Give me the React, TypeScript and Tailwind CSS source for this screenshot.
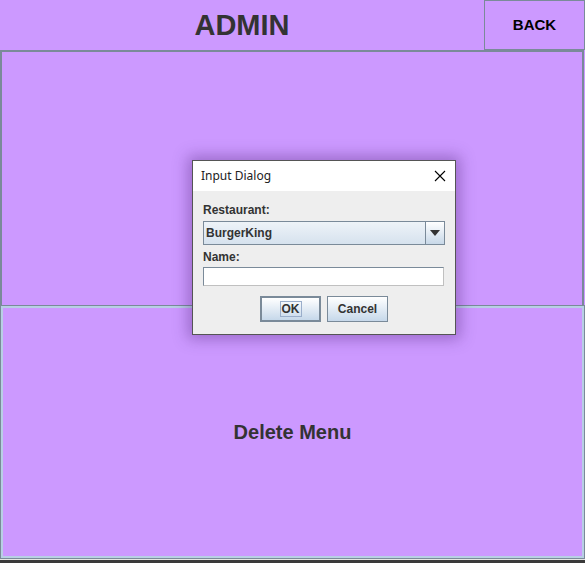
export default function App() {
  return (
    <div className="relative w-[585px] h-[563px] overflow-hidden bg-[#cc99ff] font-['Liberation_Sans',Arial,sans-serif]">
      {/* Header */}
      <div className="flex h-[50px]">
        <div className="flex-1 flex items-center justify-center">
          <span className="text-[29px] font-bold text-[#333333] leading-none">ADMIN</span>
        </div>
        <button className="w-[101px] h-[50px] border border-[#7a8a99] flex items-center justify-center text-[15px] font-bold text-black">
          BACK
        </button>
      </div>

      {/* Top panel */}
      <div className="h-[255px] border-t-2 border-l-2 border-r-2 border-[#7a8a99] mr-[1px]" />

      {/* Bottom panel */}
      <div className="h-[254px] border border-[#7a8a99] bg-[#b8cfe5] p-[2px]">
        <div className="h-full bg-[#cc99ff] flex items-center justify-center">
          <span className="text-[20px] font-bold text-[#333333]">Delete Menu</span>
        </div>
      </div>
      <div className="h-[1px] bg-[#e4e4e4]" />
      <div className="h-[3px] bg-[#3a3a3a]" />

      {/* Dialog */}
      <div className="absolute left-[192px] top-[160px] w-[264px] h-[175px] border border-[#555555] bg-[#eeeeee] shadow-[0_0_14px_4px_rgba(60,20,100,0.35)] flex flex-col">
        <div className="h-[30px] bg-white flex items-center justify-between pl-[8px] pr-[9px]">
          <span className="text-[12px] text-[#222] font-['Noto_Sans',sans-serif]">Input Dialog</span>
          <svg width="12" height="12" viewBox="0 0 12 12" className="text-black">
            <path d="M1 1 L11 11 M11 1 L1 11" stroke="currentColor" strokeWidth="1.1" />
          </svg>
        </div>
        <div className="flex flex-col px-[10px] pt-[12px]">
          <span className="text-[12px] font-bold text-[#333] leading-[14px]">Restaurant:</span>
          <div className="mt-[4px] flex h-[24px] w-[242px] border border-[#7a8a99]">
            <div className="flex-1 flex items-center pl-[2px] bg-gradient-to-b from-[#eef3f8] to-[#d6e2ee] border-r border-[#7a8a99]">
              <span className="text-[12px] font-bold text-[#333]">BurgerKing</span>
            </div>
            <div className="w-[18px] flex items-center justify-center bg-gradient-to-b from-[#ffffff] to-[#c8d8e8]">
              <svg width="10" height="6" viewBox="0 0 10 6">
                <path d="M0 0 L10 0 L5 6 Z" fill="#333" />
              </svg>
            </div>
          </div>
          <span className="mt-[5px] text-[12px] font-bold text-[#333] leading-[14px]">Name:</span>
          <div className="mt-[3px] h-[19px] w-[241px] bg-white border border-[#7a8a99] border-r-[#c0c0c0] border-b-[#c0c0c0]" />
          <div className="mt-[10px] flex justify-center gap-[6px]">
            <button className="w-[61px] h-[26px] border-2 border-[#7a8a99] bg-gradient-to-b from-[#ffffff] to-[#c6d8ea] flex items-center justify-center">
              <span className="text-[12px] font-bold text-[#333] border border-[#9aaecb] px-[1px] leading-[14px]">OK</span>
            </button>
            <button className="w-[61px] h-[26px] border border-[#7a8a99] bg-gradient-to-b from-[#ffffff] to-[#c6d8ea] flex items-center justify-center">
              <span className="text-[12px] font-bold text-[#333]">Cancel</span>
            </button>
          </div>
        </div>
      </div>
    </div>
  )
}
